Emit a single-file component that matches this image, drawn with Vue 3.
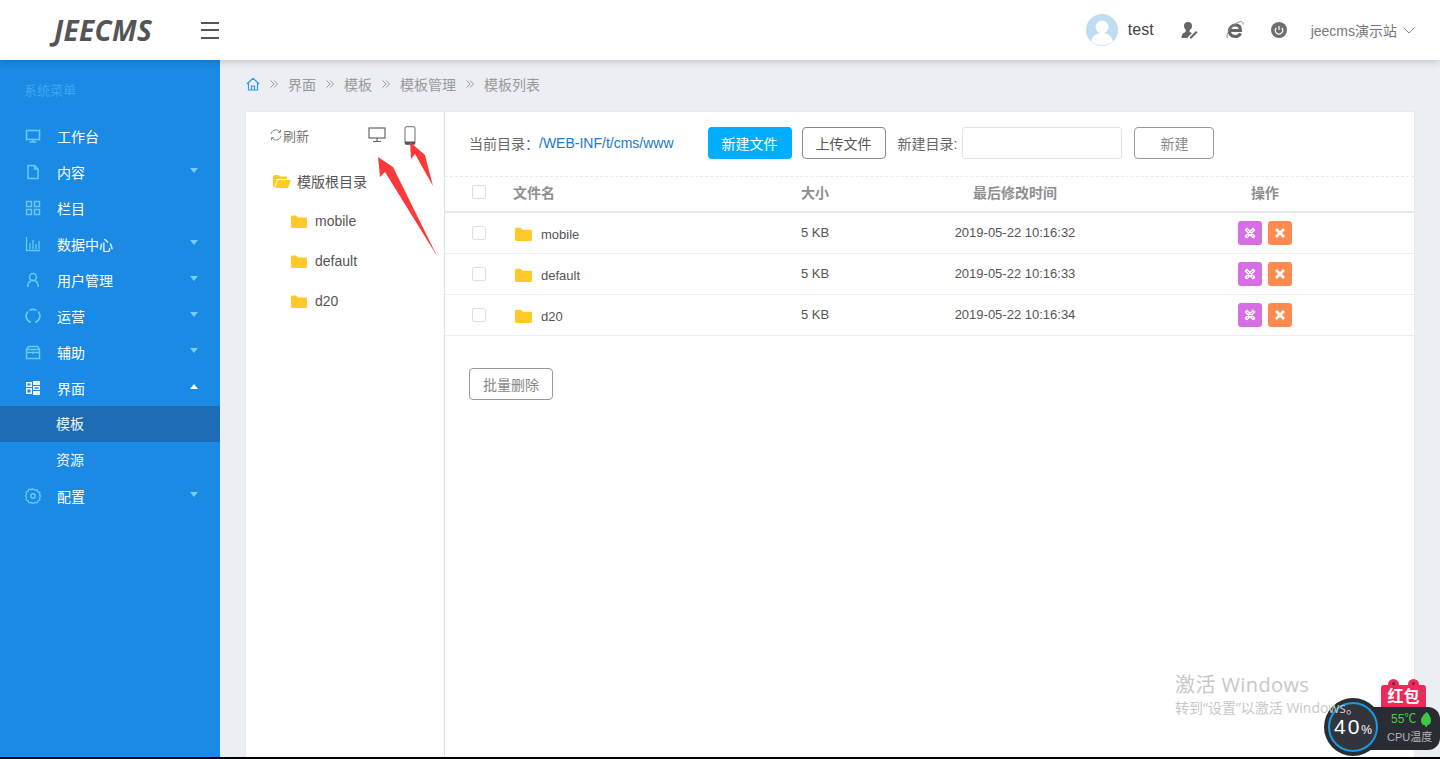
<script setup>
const menu = [
  { label: '工作台', icon: 'monitor' },
  { label: '内容', icon: 'file', arrow: true },
  { label: '栏目', icon: 'grid' },
  { label: '数据中心', icon: 'chart', arrow: true },
  { label: '用户管理', icon: 'user', arrow: true },
  { label: '运营', icon: 'ring', arrow: true },
  { label: '辅助', icon: 'box', arrow: true },
  { label: '界面', icon: 'tiles', open: true, children: [{ label: '模板', active: true }, { label: '资源' }] },
  { label: '配置', icon: 'gear', arrow: true }
]
const crumbs = ['界面', '模板', '模板管理', '模板列表']
const folders = ['mobile', 'default', 'd20']
const rows = [
  { name: 'mobile', size: '5 KB', time: '2019-05-22 10:16:32' },
  { name: 'default', size: '5 KB', time: '2019-05-22 10:16:33' },
  { name: 'd20', size: '5 KB', time: '2019-05-22 10:16:34' }
]
</script>

<template>
  <div class="page">
    <header class="top">
      <div class="logo">JEECMS</div>
      <div class="burger"><i></i><i></i><i></i></div>
      <div class="top-right">
        <svg class="avatar" viewBox="0 0 32 32" width="32" height="32">
          <circle cx="16" cy="16" r="16" fill="#c0dcf0" />
          <circle cx="16" cy="13" r="6.5" fill="#fff" />
          <path d="M5 27c2-6 6-8 11-8s9 2 11 8a16 16 0 0 1-22 0z" fill="#fff" />
        </svg>
        <span class="uname">test</span>
        <svg class="ti ti-user" viewBox="0 0 18 18" width="18" height="18">
          <circle cx="8" cy="5" r="4" fill="#666" />
          <path d="M6 8h4l-.5 3L12 12l-5 5H1.500c0-4 2-5 4-6z" fill="#666" />
          <path d="M10 16l6-6 1.500 1.500-6 6H10z" fill="#666" />
        </svg>
        <svg class="ti ti-ie" viewBox="0 0 20 20" width="20" height="20">
          <path d="M4.500 10.500h11C15.500 7 13.500 5 10.500 5S5 7.500 4.500 10.500 6 16.500 10.200 16.500c2.500 0 4.300-1 5.300-3.200" fill="none" stroke="#666" stroke-width="3.200" />
          <path d="M2.500 18C.5 14.500 6 6 12 2.800c4-2 6.500-1.500 6 1.500" fill="none" stroke="#888" stroke-width="1" />
        </svg>
        <svg class="ti ti-power" viewBox="0 0 16 16" width="16" height="16">
          <circle cx="8" cy="8" r="8" fill="#6e6e6e" />
          <path d="M5.300 6a3.600 3.600 0 1 0 5.400 0M8 4v4" fill="none" stroke="#fff" stroke-width="1.200" />
        </svg>
        <span class="site">jeecms演示站</span>
        <svg class="chev" viewBox="0 0 12 7" width="12" height="7"><path d="M.5.500 6 6 11.500.500" fill="none" stroke="#888" /></svg>
      </div>
    </header>

    <div class="body">
      <aside class="side">
        <div class="side-title">系统菜单</div>
        <template v-for="m in menu" :key="m.label">
          <div class="mi">
            <svg class="mi-icon" :class="{ lit: m.open }" viewBox="0 0 16 16" width="16" height="16">
              <g v-if="m.icon === 'monitor'" fill="none" stroke="currentColor" stroke-width="1.600">
                <rect x="1.500" y="2.500" width="13" height="9" /><path d="M8 12v2M4.500 14h7" />
              </g>
              <path v-else-if="m.icon === 'file'" d="M3 1.500h6.500L13 5v9.500H3zM9.500 1.500V5H13" fill="none" stroke="currentColor" stroke-width="1.500" />
              <g v-else-if="m.icon === 'grid'" fill="none" stroke="currentColor" stroke-width="1.500">
                <rect x="1.500" y="1.500" width="5" height="5" /><rect x="9.500" y="1.500" width="5" height="5" />
                <rect x="1.500" y="9.500" width="5" height="5" /><rect x="9.500" y="9.500" width="5" height="5" />
              </g>
              <path v-else-if="m.icon === 'chart'" d="M1.500 1v13.500H15M5 13V7M8 13V4M11 13V8M14 13V5" fill="none" stroke="currentColor" stroke-width="1.300" />
              <g v-else-if="m.icon === 'user'" fill="none" stroke="currentColor" stroke-width="1.500">
                <circle cx="8" cy="5" r="3.500" /><path d="M2.800 15c0-4 2-6.500 5.200-6.500s5.200 2.500 5.200 6.500" />
              </g>
              <g v-else-if="m.icon === 'ring'" fill="none" stroke="currentColor" stroke-width="1.700">
                <path d="M3 3.500a6.500 6.500 0 0 0 3 10.800M10 14.300a6.500 6.500 0 0 0 3-10.800M4.500 2.500a6.500 6.500 0 0 1 7 0" />
              </g>
              <g v-else-if="m.icon === 'box'" fill="none" stroke="currentColor" stroke-width="1.500">
                <path d="M1.500 5.500h13v9h-13zM1.500 5.500l2-3h9l2 3M1.500 8.500h13M8 7.500v2.500" />
              </g>
              <g v-else-if="m.icon === 'tiles'" fill="currentColor">
                <path d="M1 2h6v5H1zM1 8h6v6H1zM8 1h7v4H8zM8 6h7v4H8zM8 11h7v4H8z" />
                <path d="M2.500 3.500h3v2h-3zM2.500 9.500h3v3h-3zM9.500 7.300h4v1.500h-4z" fill="#1a8ae4" />
              </g>
              <g v-else fill="none" stroke="currentColor">
                <path d="M8 1l1.800 1.100 2.100-.3 1 1.900 1.900 1-.3 2.100L15.500 8l-1 1.800.3 2.100-1.900 1-1 1.900-2.100-.3L8 15.500l-1.800-1-2.100.3-1-1.900-1.900-1 .3-2.100L.5 8l1-1.800-.3-2.100 1.900-1 1-1.900 2.100.3z" stroke-width="1.300" />
                <circle cx="8" cy="8" r="2.200" stroke-width="1.400" />
              </g>
            </svg>
            <span class="mi-text">{{ m.label }}</span>
            <i v-if="m.arrow" class="tri"></i>
            <i v-if="m.open" class="tri up"></i>
          </div>
          <div v-if="m.children" class="sub">
            <div v-for="c in m.children" :key="c.label" class="sub-item" :class="{ active: c.active }">{{ c.label }}</div>
          </div>
        </template>
      </aside>

      <main class="main">
        <nav class="crumbs">
          <svg class="home" viewBox="0 0 14 14" width="14" height="14">
            <path d="M.8 7 7 1.200 13.200 7M2.500 6v7h9V6M5.500 13V9h3v4" fill="none" stroke="#2d9be8" stroke-width="1.200" />
          </svg>
          <template v-for="c in crumbs" :key="c">
            <svg class="sep" viewBox="0 0 8 8" width="8" height="8"><path d="M.5.500 4 4 .5 7.500M4 .5 7.500 4 4 7.500" fill="none" stroke="#999" /></svg>
            <span>{{ c }}</span>
          </template>
        </nav>

        <section class="card">
          <div class="tree">
            <div class="tree-tools">
              <svg class="refresh" viewBox="0 0 12 12" width="12" height="12">
                <path d="M1 5a5 5 0 0 1 9-2M11 7a5 5 0 0 1-9 2M10.500.8V3.300H8M1.500 11.200V8.700H4" fill="none" stroke="#888" />
              </svg>
              <span class="refresh-text">刷新</span>
              <svg class="pc" viewBox="0 0 18 16" width="18" height="16">
                <rect x="1" y="1" width="16" height="10" fill="none" stroke="#666" stroke-width="1.200" />
                <path d="M9 11v3M5 14.500h8" stroke="#666" stroke-width="1.200" />
              </svg>
              <svg class="phone" viewBox="0 0 12 19" width="12" height="19">
                <rect x="1" y=".7" width="10" height="17.600" rx="2" fill="none" stroke="#888" stroke-width="1.200" />
                <path d="M1 15.500h10v1.500a1.500 1.500 0 0 1-1.500 1.500h-7A1.500 1.500 0 0 1 1 17z" fill="#555" />
              </svg>
            </div>
            <div class="tree-root">
              <svg viewBox="0 0 18 14" width="18" height="14">
                <path d="M0 2.500 1.500 1h4l1.500 1.500h7V5H4L1.500 13H0z" fill="#ffca28" />
                <path d="M4.800 6H18l-3 8H2z" fill="#ffca28" />
              </svg>
              <span>模版根目录</span>
            </div>
            <div v-for="f in folders" :key="f" class="tree-item">
              <svg viewBox="0 0 16 13" width="16" height="13">
                <path d="M0 1.500A1 1 0 0 1 1 .5h4.500L7 2.500h8a1 1 0 0 1 1 1v8.500a1 1 0 0 1-1 1H1a1 1 0 0 1-1-1z" fill="#ffca28" />
              </svg>
              <span>{{ f }}</span>
            </div>
          </div>

          <div class="files">
            <div class="toolbar">
              <span class="dir-label">当前目录：</span>
              <a class="dir-link">/WEB-INF/t/cms/www</a>
              <button class="btn primary">新建文件</button>
              <button class="btn outline">上传文件</button>
              <span class="new-label">新建目录:</span>
              <input class="dir-input" type="text" />
              <button class="btn ghost">新建</button>
            </div>

            <div class="grid head">
              <span class="cell-check"><i class="check"></i></span>
              <span>文件名</span>
              <span class="center">大小</span>
              <span class="center">最后修改时间</span>
              <span class="center">操作</span>
            </div>
            <div v-for="r in rows" :key="r.name" class="grid row">
              <span class="cell-check"><i class="check"></i></span>
              <span class="name">
                <svg viewBox="0 0 16 13" width="17" height="14">
                  <path d="M0 1.500A1 1 0 0 1 1 .5h4.500L7 2.500h8a1 1 0 0 1 1 1v8.500a1 1 0 0 1-1 1H1a1 1 0 0 1-1-1z" fill="#ffca28" />
                </svg>
                <span>{{ r.name }}</span>
              </span>
              <span class="center val">{{ r.size }}</span>
              <span class="center val">{{ r.time }}</span>
              <span class="ops">
                <span class="op purple">
                  <svg viewBox="0 0 12 12" width="12" height="12">
                    <path d="M1.500 3 3 1.500 10.500 9a1.500 1.500 0 0 1-1.500 1.500zM10.500 3 9 1.500 1.500 9A1.500 1.500 0 0 0 3 10.500z" fill="none" stroke="#fff" stroke-width="1.400" />
                  </svg>
                </span>
                <span class="op orange">
                  <svg viewBox="0 0 12 12" width="12" height="12">
                    <path d="M2 2l8 8M10 2l-8 8" stroke="#fff" stroke-width="2.600" />
                  </svg>
                </span>
              </span>
            </div>
            <button class="btn ghost batch">批量删除</button>
          </div>
        </section>
      </main>
    </div>
    <div class="baseline"></div>

    <svg class="arrows" viewBox="0 0 1440 759" width="1440" height="759">
      <path d="M378 157 380 177 385 172 437 256 393 167z" fill="#fa3a3a" />
      <path d="M410 142 411 159 415 154 433 186 425 155z" fill="#fa3a3a" />
    </svg>

    <div class="packet">
      <i class="ear left"></i><i class="ear right"></i>
      <span class="packet-text">红包</span>
    </div>
    <div class="temp">
      <div class="temp-line">55℃
        <svg viewBox="0 0 10 15" width="10" height="15"><path d="M6 0c2 3 4 5 4 8.500a5 5 0 0 1-4 5V15H4.500v-1.500A5 5 0 0 1 0 8.500c0-3 3-6.500 6-8.500z" fill="#3fc83f" /></svg>
      </div>
      <div class="temp-sub">CPU温度</div>
    </div>
    <div class="gauge"><div class="gauge-ring"><span class="pct">40<small>%</small></span></div></div>

    <div class="watermark">
      <div class="wm1">激活 Windows</div>
      <div class="wm2">转到“设置”以激活 Windows。</div>
    </div>
  </div>
</template>

<style>
html, body { margin: 0; padding: 0; background: #fff; overflow: hidden; }
</style>

<style scoped>
.page {
  position: relative;
  width: 1440px;
  height: 759px;
  overflow: hidden;
  display: flex;
  flex-direction: column;
  font-family: "Liberation Sans", "Noto Sans CJK SC", sans-serif;
  font-size: 14px;
  color: #555;
}
.top {
  position: relative;
  z-index: 2;
  flex: 0 0 60px;
  display: flex;
  align-items: center;
  background: #fff;
  box-shadow: 0 2px 7px rgba(0, 0, 0, .16);
}
.logo {
  width: 201px;
  padding-left: 54px;
  box-sizing: border-box;
  font-family: "Open Sans", sans-serif;
  font-size: 28px;
  font-weight: 700;
  font-style: italic;
  letter-spacing: .3px;
  color: #555;
}
.burger { display: flex; flex-direction: column; gap: 5.500px; width: 18px; }
.burger i { display: block; height: 2px; background: #555; }
.top-right { margin-left: auto; display: flex; align-items: center; padding-right: 25px; }
.uname { margin-left: 10px; font-size: 16px; color: #444; }
.ti-user { margin-left: 26px; }
.ti-ie { margin-left: 27px; }
.ti-power { margin-left: 26px; }
.site { margin-left: 24px; color: #777; }
.chev { margin-left: 6px; }

.body { flex: 1; display: flex; min-height: 0; }
.side { flex: 0 0 220px; background: #1a8ae4; color: #fff; }
.side-title { height: 58px; padding: 22px 0 0 24px; box-sizing: border-box; font-size: 13px; line-height: 17px; color: #3fa6f2; }
.mi { height: 36px; display: flex; align-items: center; padding: 0 22px 0 25px; }
.mi-icon { color: #68c8fa; flex: none; }
.mi-icon.lit { color: #e8f5ff; }
.mi-text { margin-left: 16px; }
.tri {
  margin: 0 0 3px auto;
  width: 0;
  height: 0;
  border-left: 4px solid transparent;
  border-right: 4px solid transparent;
  border-top: 5px solid #7ccbf8;
}
.tri.up { border-top: 0; border-bottom: 5px solid #fff; }
.sub-item { height: 36px; line-height: 36px; padding-left: 56px; color: #eef6fc; }
.sub-item.active { background: #1c6db5; }

.main { flex: 1; min-width: 0; display: flex; flex-direction: column; background: #ebeef3; padding: 0 25px; }
.crumbs { flex: 0 0 51px; box-sizing: border-box; padding-bottom: 3px; display: flex; align-items: center; color: #999; }
.home { margin-left: 1px; }
.sep { margin: 0 10px; }
.card { flex: 1; display: flex; background: #fff; border: 1px solid #e6eaf0; border-bottom: 0; box-sizing: border-box; min-height: 0; }

.tree { flex: 0 0 199px; box-sizing: border-box; border-right: 1px solid #d6e1e8; }
.tree-tools { display: flex; align-items: center; height: 30px; padding: 8px 0 0 24px; }
.refresh-text { margin-left: 1px; font-size: 13px; color: #777; }
.pc { margin-left: 59px; }
.phone { margin-left: 18px; }
.tree-root { display: flex; align-items: center; margin-top: 16px; padding-left: 27px; height: 30px; color: #555; }
.tree-root span { margin-left: 6px; }
.tree-item { display: flex; align-items: center; height: 40px; padding-left: 45px; }
.tree-item span { margin-left: 8px; }
.tree-root + .tree-item { margin-top: 5px; }

.files { flex: 1; min-width: 0; }
.toolbar {
  height: 65px;
  box-sizing: border-box;
  display: flex;
  align-items: center;
  padding: 0 0 2px 24px;
  border-bottom: 1px dashed #e8ebf0;
}
.dir-label { color: #666; }
.dir-link { color: #2079c7; }
.btn {
  height: 32px;
  width: 84px;
  padding: 0;
  box-sizing: border-box;
  border-radius: 4px;
  font-family: inherit;
  font-size: 14px;
  background: #fff;
}
.primary { margin-left: 34px; border: 0; background: #00aeff; color: #fff; }
.outline { margin-left: 10px; border: 1px solid #888; color: #555; }
.new-label { margin-left: 12px; color: #666; }
.dir-input { margin-left: 5px; width: 160px; height: 32px; box-sizing: border-box; border: 1px solid #e2e2e2; border-radius: 3px; background: #fff; }
.ghost { border: 1px solid #999; color: #888; }
.toolbar .ghost { margin-left: 12px; width: 80px; }
.batch { margin: 32px 0 0 24px; display: block; }

.grid { display: grid; grid-template-columns: 68px 237px 130px 270px 230px; align-items: center; box-sizing: border-box; font-size: 13px; }
.cell-check { padding-left: 27px; display: flex; }
.check { width: 14px; height: 14px; box-sizing: border-box; border: 1px solid #dcdfe6; border-radius: 2px; display: block; }
.center { text-align: center; }
.head { height: 36px; padding-bottom: 4px; border-bottom: 2px solid #e6e9f3; font-size: 14px; font-weight: 700; color: #8f8f8f; }
.row { height: 41px; border-bottom: 1px solid #eceef2; color: #555; }
.val { margin-top: -2px; }
.name { display: flex; align-items: center; padding-left: 2px; padding-top: 2px; }
.name span { margin-left: 9px; font-size: 13px; }
.ops { display: flex; justify-content: center; gap: 6px; }
.op { width: 24px; height: 24px; border-radius: 3px; display: flex; align-items: center; justify-content: center; }
.purple { background: #d66fe6; }
.orange { background: #ff8a50; }

.baseline { flex: 0 0 2px; background: #000; }
.arrows { position: absolute; left: 0; top: 0; pointer-events: none; z-index: 3; }

.watermark { position: absolute; left: 1175px; top: 671px; color: #c8c8c8; z-index: 6; font-family: "Open Sans", "Noto Sans CJK SC", sans-serif; }
.wm1 { font-size: 20px; line-height: 27px; letter-spacing: .4px; }
.wm2 { font-size: 14px; line-height: 20px; white-space: nowrap; }

.packet {
  position: absolute;
  z-index: 4;
  left: 1381px;
  top: 685px;
  width: 45px;
  height: 28px;
  background: #ec2b5a;
  border-radius: 3px;
  color: #fff;
  font-size: 16px;
  font-weight: 700;
  text-align: center;
  line-height: 24px;
}
.packet-text { position: relative; }
.ear { position: absolute; top: -6px; width: 11px; height: 11px; border-radius: 50%; background: #ec2b5a; }
.ear::after { content: ""; position: absolute; left: 4px; top: 3px; width: 3px; height: 3px; border-radius: 50%; background: #7a2035; }
.ear.left { left: 7px; }
.ear.right { right: 7px; }
.temp {
  position: absolute;
  z-index: 4;
  left: 1370px;
  top: 707px;
  width: 70px;
  height: 43px;
  box-sizing: border-box;
  padding: 3px 0 0 21px;
  background: #2a2c33;
  border-radius: 0 12px 12px 0;
}
.temp-line { display: flex; align-items: center; gap: 5px; font-size: 12px; line-height: 18px; color: #45d045; }
.temp-sub { font-size: 11px; line-height: 18px; color: #b5b5b5; white-space: nowrap; margin-left: -4px; }
.gauge {
  position: absolute;
  z-index: 5;
  left: 1324px;
  top: 698px;
  width: 58px;
  height: 58px;
  padding: 4px;
  border-radius: 50%;
  background: #2a2c33;
  box-sizing: border-box;
}
.gauge-ring {
  width: 100%;
  height: 100%;
  box-sizing: border-box;
  border: 2px solid #1a9ae0;
  border-radius: 50%;
  background: #33353c;
  display: flex;
  align-items: center;
  justify-content: center;
  color: #fff;
}
.pct { font-size: 21px; letter-spacing: 2px; font-family: "Liberation Sans", sans-serif; }
.pct small { font-size: 12px; letter-spacing: 0; }
</style>
